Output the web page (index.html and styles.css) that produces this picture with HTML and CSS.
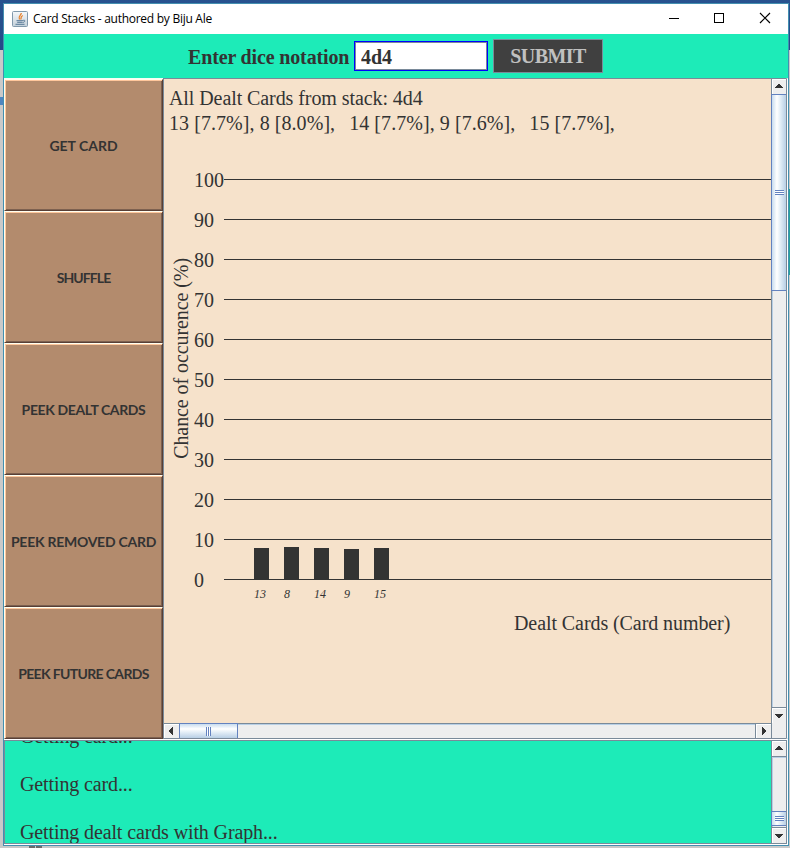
FILE: index.html
```html
<!DOCTYPE html>
<html lang="en">
<head>
<meta charset="utf-8">
<title>Card Stacks</title>
<link rel="stylesheet" href="styles.css">
</head>
<body>
<div class="window">
  <header class="titlebar">
    <svg class="app-icon" width="16" height="16" viewBox="0 0 16 16">
      <defs><linearGradient id="tile" x2="0" y2="1"><stop stop-color="#f6f8fa"/><stop offset="1" stop-color="#c3d0da"/></linearGradient></defs>
      <rect x=".5" y=".5" width="15" height="15" rx="1" fill="url(#tile)" stroke="#8199ac"/>
      <path d="M9.300 2C9.500 4.500 5.500 5 7.500 8.500M10.800 4.500C8 5.800 9.800 6.800 8.600 8.500" fill="none" stroke="#e8822c" stroke-width="1.300"/>
      <path d="M4.500 9.700h6.500M5.200 11.300h5M3.500 13.300h9M11.200 9.300c2.600-.6 2 2-.7 2.200" fill="none" stroke="#557895"/>
    </svg>
    <span class="title">Card Stacks - authored by Biju Ale</span>
    <svg class="controls" width="110" height="30" viewBox="0 0 110 30" fill="none" stroke="#000">
      <path d="M2 14.500h10M47.500 9.500h9v9h-9z" shape-rendering="crispEdges"/>
      <path d="M93 9l10 10M103 9l-10 10" stroke-width="1.200"/>
    </svg>
  </header>
  <form class="toolbar">
    <label class="prompt" for="dice">Enter dice notation</label>
    <input class="field" id="dice" value="4d4">
    <button class="submit" type="button">SUBMIT</button>
  </form>
  <main class="content">
    <nav class="actions">
      <button class="action get">GET CARD</button>
      <button class="action shuffle">SHUFFLE</button>
      <button class="action dealt">PEEK DEALT CARDS</button>
      <button class="action removed">PEEK REMOVED CARD</button>
      <button class="action future">PEEK FUTURE CARDS</button>
    </nav>
    <section class="pane">
      <div class="view">
        <p class="line heading">All Dealt Cards from stack: 4d4</p>
        <p class="line cards"><span>13 [7.7%], 8 [8.0%],</span><span>14 [7.7%], 9 [7.6%],</span><span>15 [7.7%],</span></p>
        <div class="chart">
          <div class="y-title"><span>Chance of occurence (%)</span></div>
          <div class="plot">
            <div class="row"><span>100</span></div>
            <div class="row"><span>90</span></div>
            <div class="row"><span>80</span></div>
            <div class="row"><span>70</span></div>
            <div class="row"><span>60</span></div>
            <div class="row"><span>50</span></div>
            <div class="row"><span>40</span></div>
            <div class="row"><span>30</span></div>
            <div class="row"><span>20</span></div>
            <div class="row"><span>10</span></div>
            <div class="row"><span>0</span></div>
            <div class="bars">
              <div class="col"><i style="height:30.7px"></i><em>13</em></div>
              <div class="col"><i style="height:32px"></i><em>8</em></div>
              <div class="col"><i style="height:30.8px"></i><em>14</em></div>
              <div class="col"><i style="height:30.4px"></i><em>9</em></div>
              <div class="col"><i style="height:31px"></i><em>15</em></div>
            </div>
          </div>
        </div>
        <p class="x-title">Dealt Cards (Card number)</p>
      </div>
      <div class="vbar">
        <svg class="arrow" viewBox="0 0 14 15"><path d="M6 5h2v1h1v1h1v1h1v1H3V8h1V7h1V6h1z"/></svg>
        <div class="track"><div class="thumb main"><b></b></div></div>
        <svg class="arrow end" viewBox="0 0 14 15"><path d="M3 6h8v1h-1v1H9v1H8v1H6V9H5V8H4V7H3z"/></svg>
      </div>
      <div class="hbar">
        <svg class="arrow" viewBox="0 0 15 14"><path d="M9 3v8H8v-1H7V9H6V8H5V6h1V5h1V4h1V3z"/></svg>
        <div class="track"><div class="thumb"><b></b></div></div>
        <svg class="arrow end" viewBox="0 0 15 14"><path d="M6 3h1v1h1v1h1v1h1v2H9v1H8v1H7v1H6z"/></svg>
      </div>
      <div class="corner"></div>
    </section>
  </main>
  <footer class="log">
    <div class="messages"><p>Getting card...</p><p>Getting card...</p><p>Getting dealt cards with Graph...</p></div>
    <div class="vbar">
      <svg class="arrow" viewBox="0 0 14 15"><path d="M6 5h2v1h1v1h1v1h1v1H3V8h1V7h1V6h1z"/></svg>
      <div class="track low"><div class="thumb"><b></b></div></div>
      <svg class="arrow end" viewBox="0 0 14 15"><path d="M3 6h8v1h-1v1H9v1H8v1H6V9H5V8H4V7H3z"/></svg>
    </div>
  </footer>
</div>
</body>
</html>
```

FILE: styles.css
```css
* { box-sizing: border-box; }
body {
  margin: 0;
  padding: 3px 1px 2px 3px;
  width: 790px;
  height: 848px;
  overflow: hidden;
  background:
    linear-gradient(#28528f, #244b88) 0 0 / 100% 50px no-repeat,
    linear-gradient(#4f86c0, #4f86c0) 0 97px / 3px 8px no-repeat,
    linear-gradient(#27a39a, #27a39a) 789px 189px / 1px 86px no-repeat,
    linear-gradient(#6b6b6b, #6b6b6b) 29px 846px / 6px 2px no-repeat,
    linear-gradient(#6b6b6b, #6b6b6b) 36px 846px / 6px 2px no-repeat,
    #c9c9c9;
  font-family: "Liberation Serif", serif;
  font-size: 20px;
  color: #333;
}
p { margin: 0; }
button { padding: 0; color: #333; }
.window {
  width: 786px;
  height: 843px;
  border: 1px solid #438fb0;
  display: flex;
  flex-direction: column;
  background: #fff;
}
.titlebar { height: 30px; display: flex; align-items: center; padding-left: 8px; }
.title { font: 12px "Open Sans", sans-serif; color: #000; margin: -2px 0 0 5px; letter-spacing: -.27px; white-space: nowrap; }
.controls { margin-left: auto; margin-right: 11px; }
.toolbar { height: 44px; margin: 0; background: #1debb8; display: flex; align-items: center; padding-left: 184px; font-weight: bold; }
.prompt { width: 161px; padding-top: 2px; letter-spacing: -.15px; white-space: nowrap; }
.field {
  width: 134px; height: 30px; margin-left: 5px; padding: 2px 0 0 6px;
  border: 1px solid #00f; outline: 0;
  box-shadow: inset 0 0 0 1px #7a8a99;
  font: bold 20px "Liberation Serif", serif; color: #333;
}
.submit { width: 110px; height: 34px; margin-left: 5px; padding-top: 1px; background: #404040; border: 1px solid #7a8a99; color: #c0c0c0; font: bold 20px "Liberation Serif", serif; letter-spacing: -.6px; }
.content { height: 661px; display: flex; }
.actions { width: 159px; padding-top: 1px; background: #f5fff5; display: flex; flex-direction: column; }
.action {
  height: 132px;
  background: #b38b6d;
  border: 1px solid;
  border-color: #fffff0 #593f35 #593f35 #fffff0;
  box-shadow: inset 1px 1px #ffc79c, inset -1px -1px #7d6150;
  font: bold 14px Lato, sans-serif;
  white-space: nowrap;
}
.shuffle { letter-spacing: -.9px; }
.dealt { letter-spacing: -.38px; }
.removed { letter-spacing: -.26px; }
.future { letter-spacing: -.65px; }
.pane {
  width: 625px;
  display: grid;
  grid-template: 644px 15px / 607px 15px;
  border: 1px solid #7a8a99;
  border-right-width: 2px;
  border-right-color: #fff;
}
.view { background: #f6e2cb; padding: 7px 0 0 5px; overflow: hidden; }
.line { height: 25px; line-height: 25px; white-space: pre; }
.heading { letter-spacing: -.08px; }
.cards { display: flex; gap: 14px; letter-spacing: .06px; }
.chart { display: flex; height: 443px; margin-top: 33px; }
.y-title { width: 25px; height: 378px; display: flex; align-items: center; justify-content: center; }
.y-title span { writing-mode: vertical-rl; transform: rotate(180deg); white-space: nowrap; line-height: 25px; letter-spacing: -.08px; }
.plot { flex: 1; }
.row { height: 40px; display: flex; align-items: flex-start; line-height: 22px; }
.row span { width: 30px; }
.row::after { content: ""; flex: 1; height: 1px; margin-top: 10px; background: #333; }
.bars { display: flex; gap: 15px; margin: -62px 0 0 60px; }
.col { width: 15px; height: 54px; display: flex; flex-direction: column; justify-content: flex-end; }
.col i { background: #333; flex: none; }
.col em { height: 22px; line-height: 31px; font-size: 12px; }
.x-title { padding-left: 345px; line-height: 24px; margin-top: -1px; letter-spacing: -.08px; }
.vbar { border-left: 1px solid #7a8a99; border-right: 1px solid #7a8a99; display: flex; flex-direction: column; background: #eee; width: 16px; }
.hbar { border-top: 1px solid #7a8a99; display: flex; background: #eee; }
.arrow { width: 14px; height: 15px; flex: none; background: #eee; box-shadow: inset 1px 1px #fff; fill: #333; shape-rendering: crispEdges; }
.vbar .end { border-top: 1px solid #7a8a99; height: 16px; }
.hbar .arrow { width: 15px; height: 14px; }
.hbar .end { border-left: 1px solid #7a8a99; width: 16px; }
.track { flex: 1; box-shadow: inset 1px 1px #b8cfe5; }
.thumb { display: flex; align-items: center; justify-content: center; border: 1px solid #6382bf; }
.vbar .thumb { background: linear-gradient(90deg, #c8dcef, #fff 35%, #e2edf6 60%, #b8cfe5); width: 15px; margin-left: -1px; height: 15px; border-right: 0; }
.vbar .main { height: 197px; }
.vbar b { width: 9px; height: 5px; background: repeating-linear-gradient(#6382bf 0 1px, #fff 1px 2px); }
.hbar .thumb { width: 59px; height: 15px; margin-top: -1px; background: linear-gradient(#c8dcef, #fff 35%, #e2edf6 60%, #b8cfe5); border-bottom: 0; }
.hbar b { width: 5px; height: 9px; background: repeating-linear-gradient(90deg, #6382bf 0 1px, #fff 1px 2px); }
.corner { background: #eee; border: 1px solid #7a8a99; border-width: 0 1px 0 1px; width: 16px; }
.log { height: 106px; border-top: 1px solid #fff; border-bottom: 1px solid #fff; display: flex; }
.messages { width: 767px; border: 1px solid #7a8a99; border-right: 0; background: #1debb8; overflow: hidden; display: flex; flex-direction: column; justify-content: flex-end; padding: 0 0 0 15px; }
.messages p { line-height: 24px; flex: none; margin-top: 24px; letter-spacing: -.12px; position: relative; top: 1px; }
.log .vbar { border-top: 1px solid #7a8a99; border-bottom: 1px solid #7a8a99; }
.log .track { border-top: 1px solid #7a8a99; }
.low { display: flex; align-items: flex-end; padding-bottom: 1px; }
```
